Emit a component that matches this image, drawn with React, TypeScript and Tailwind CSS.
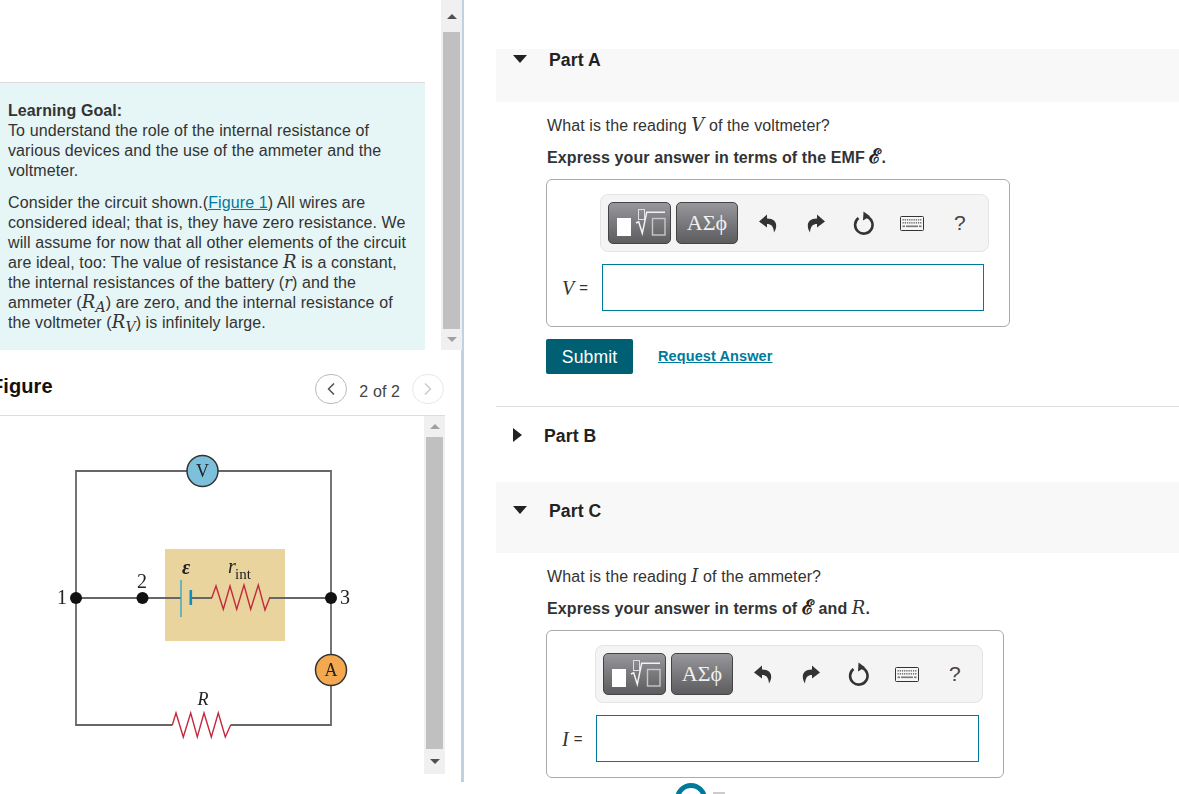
import { ChevronLeft, ChevronRight } from 'lucide-react';
import type { ReactNode } from 'react';

const serif = { fontFamily: '"Liberation Serif", serif' };

function M({ children, className = "font-['DejaVu_Serif',serif] text-[18px]" }: { children: ReactNode; className?: string }) {
  return <i className={`leading-[0] font-normal ${className}`}>{children}</i>;
}

function Script() {
  return <span className="font-['DejaVu_Serif',serif] text-[20px] leading-[0] font-bold text-[#222]">ℰ</span>;
}

function UndoIcon({ flip }: { flip?: boolean }) {
  return (
    <svg width="18" height="19" viewBox="0 0 18 19" className={flip ? '-scale-x-100' : ''}>
      <path d="M8 0.5 L0 7.5 L8 13.5 V10 C12 10 14.5 12 15 18.5 C19 12 18 4.5 8 4.5 Z" fill="#333" />
    </svg>
  );
}

function RefreshIcon() {
  return (
    <svg width="22" height="24" viewBox="0 0 22 24">
      <path d="M14 5.8 A8.7 8.7 0 1 1 5.5 7" fill="none" stroke="#333" strokeWidth="2.6" />
      <path d="M10.5 0.5 L17 5.2 L10 9.5 Z" fill="#333" />
    </svg>
  );
}

function KeyboardIcon() {
  const keys = [];
  for (let i = 0; i < 9; i++) {
    keys.push(<rect key={`a${i}`} x={2.5 + i * 2.2} y="3" width="1.3" height="1.6" fill="#777" />);
    keys.push(<rect key={`b${i}`} x={2.5 + i * 2.2} y="6" width="1.3" height="1.6" fill="#777" />);
  }
  return (
    <svg width="24" height="15" viewBox="0 0 24 15">
      <rect x="0.5" y="0.5" width="23" height="14" rx="1" fill="#f7f7f7" stroke="#333" />
      {keys}
      <rect x="2.5" y="9.5" width="2.5" height="1.6" fill="#777" />
      <rect x="6" y="9.5" width="12" height="1.6" fill="#777" />
      <rect x="19" y="9.5" width="2.5" height="1.6" fill="#777" />
    </svg>
  );
}

function Toolbar({ className }: { className: string }) {
  return (
    <div className={`flex h-[58px] items-center rounded-[8px] border border-[#e4e4e4] bg-[#f4f4f4] pl-[7px] ${className}`}>
      <div className="h-[42px] w-[63px] rounded-[5px] border border-[#444] bg-gradient-to-b from-[#97979c] to-[#5d5d60]">
        <svg width="61" height="40" viewBox="1 1 61 40" className="block">
          <rect x="9" y="16" width="14" height="18" fill="#fff" />
          <rect x="30.5" y="7.5" width="6" height="10" fill="none" stroke="#e0e0e0" />
          <path d="M28 21 L30.7 19.7 L34.3 31.3 L38.7 10.3 H57" fill="none" stroke="#f2f2f2" strokeWidth="1.5" />
          <rect x="44.5" y="16.5" width="12.5" height="16.5" fill="none" stroke="#c8c8c8" strokeWidth="1.4" />
        </svg>
      </div>
      <div className="ml-[5px] flex h-[42px] w-[62px] items-center justify-center rounded-[5px] border border-[#444] bg-gradient-to-b from-[#97979c] to-[#5d5d60] font-['Liberation_Serif',serif] text-[22px] text-[#f0f0f0]">
        ΑΣϕ
      </div>
      <div className="ml-[6px] flex items-center">
        <div className="flex w-[48px] justify-center"><UndoIcon /></div>
        <div className="flex w-[48px] justify-center"><UndoIcon flip /></div>
        <div className="flex w-[48px] justify-center"><RefreshIcon /></div>
        <div className="flex w-[48px] justify-center"><KeyboardIcon /></div>
        <div className="flex w-[48px] justify-center text-[21px] text-[#444]">?</div>
      </div>
    </div>
  );
}

function PartHeader({ label, className }: { label: string; className: string }) {
  return (
    <div className={`flex bg-[#f8f8f8] pl-[17px] ${className}`}>
      <div className="mt-[6px] h-0 w-0 border-x-[7px] border-t-[8px] border-x-transparent border-t-[#222]" />
      <div className="mt-px ml-[22px] text-[17.6px] leading-[20px] font-bold text-[#222]">{label}</div>
    </div>
  );
}

function ScrollBar({ thumb, top, bottom, upColor, downColor, className }: {
  thumb: string; top: string; bottom: string; upColor: string; downColor: string; className: string;
}) {
  return (
    <div className={`flex flex-col items-center bg-[#f0f0f0] ${className}`}>
      <div className={`flex w-full items-center justify-center ${top}`}>
        <div className={`h-0 w-0 border-x-[5px] border-b-[5px] border-x-transparent ${upColor}`} />
      </div>
      <div className={`w-[17px] bg-[#c0c0c0] ${thumb}`} />
      <div className={`flex w-full items-center justify-center ${bottom}`}>
        <div className={`h-0 w-0 border-x-[5px] border-t-[5px] border-x-transparent ${downColor}`} />
      </div>
    </div>
  );
}

function Circuit() {
  return (
    <svg width="424" height="358" viewBox="0 416 424 358" className="block blur-[0.4px]">
      <rect x="165" y="549" width="120" height="92" fill="#e9d49d" />
      <path d="M76 598 V471 H331 V725 H230.5 M172.5 725 H76 V598 H181 M191 598 H212 M270 598 H331" fill="none" stroke="#666" strokeWidth="1.8" />
      <path d="M181 580 V617" stroke="#3aa5c0" strokeWidth="1.4" />
      <path d="M190.8 590 V605" stroke="#0a8fc4" strokeWidth="2.6" />
      <path d="M211.7 598 L216 586 L223.3 609.3 L230 586 L236.7 609.3 L244 585 L250.7 609.3 L258.3 585 L265 610 L270 597" fill="none" stroke="#c5293f" strokeWidth="1.4" />
      <path d="M172.3 725 L176 713 L183.3 737 L190.7 713 L197.3 737 L204 713 L211.3 737 L218.3 713 L225.3 737 L230.7 725" fill="none" stroke="#c5293f" strokeWidth="1.4" />
      <circle cx="202.5" cy="471" r="15.5" fill="#7cc0dc" stroke="#333" strokeWidth="1.5" />
      <circle cx="331" cy="670" r="15.5" fill="#f4a950" stroke="#333" strokeWidth="1.5" />
      <circle cx="76" cy="598" r="6" fill="#111" />
      <circle cx="142.5" cy="598" r="6" fill="#111" />
      <circle cx="331" cy="598" r="6" fill="#111" />
      <g style={serif} fill="#222" fontSize="20">
        <text x="202.5" y="477" textAnchor="middle" fontSize="18">V</text>
        <text x="331" y="676" textAnchor="middle" fontSize="18">A</text>
        <text x="57" y="603.5">1</text>
        <text x="137" y="588">2</text>
        <text x="340" y="603.5">3</text>
        <text x="197.5" y="705" fontStyle="italic" fontSize="18">R</text>
        <text x="182" y="574" fontStyle="italic" fontWeight="bold" fontSize="20">ε</text>
        <text x="228" y="573" fontStyle="italic" fontSize="20">r</text>
        <text x="235" y="579" fontSize="15">int</text>
      </g>
    </svg>
  );
}

function AnswerBox({ symbol, boxClass, toolbarClass, labelClass, inputClass }: {
  symbol: string; boxClass: string; toolbarClass: string; labelClass: string; inputClass: string;
}) {
  return (
    <div className={`h-[148px] rounded-[6px] border border-[#aaa] pt-[14px] ${boxClass}`}>
      <Toolbar className={toolbarClass} />
      <div className="mt-[12px] flex items-center">
        <div className={`flex items-center text-[#333] ${labelClass}`}>
          <M className="font-['Liberation_Serif',serif] text-[20px]">{symbol}</M>
          <span className="ml-[5px] text-[15px]">=</span>
        </div>
        <div className={`h-[47px] border border-[#007a9c] ${inputClass}`} />
      </div>
    </div>
  );
}

export default function App() {
  return (
    <div className="flex h-[794px] w-[1179px] overflow-hidden bg-white font-['Liberation_Sans',sans-serif] text-[16px] leading-[20px] tracking-[0.1px] text-[#333]">
      <div className="w-[464px] flex-none">
        <div className="flex h-[350px] border-r-2 border-[#c0d1e2]">
          <div className="w-[441px] flex-none pt-[82px]">
            <div className="h-[268px] w-[425px] border-t border-[#ddd] bg-[#e6f5f6] pt-[18px] pr-[12px] pl-[8px]">
              <b>Learning Goal:</b>
              <p>To understand the role of the internal resistance of various devices and the use of the ammeter and the voltmeter.</p>
              <p className="mt-[12px]">
                Consider the circuit shown.(<span className="text-[#007a9c] underline">Figure 1</span>) All wires are considered ideal; that is, they have zero resistance. We will assume for now that all other elements of the circuit are ideal, too: The value of resistance <M>R</M> is a constant, the internal resistances of the battery (<M className="font-['DejaVu_Serif',serif] text-[16px]">r</M>) and the ammeter (<M>R<sub className="text-[14px]">A</sub></M>) are zero, and the internal resistance of the voltmeter (<M>R<sub className="text-[14px]">V</sub></M>) is infinitely large.
              </p>
            </div>
          </div>
          <ScrollBar
            className="w-[21px]"
            top="h-[32px]"
            thumb="h-[297px]"
            bottom="h-[21px]"
            upColor="border-b-[#505050]"
            downColor="border-t-[#a0a0a0]"
          />
        </div>
        <div className="flex h-[432px] flex-col border-r-[3px] border-[#c0d1e2]">
          <div className="flex h-[66px] w-[445px] flex-none items-start justify-between border-b border-[#ddd] pt-[24px]">
            <div className="mt-[2px] -ml-[9px] text-[20px] font-bold text-[#111]">Figure</div>
            <div className="flex items-start">
              <div className="flex h-[30px] w-[32px] items-center justify-center rounded-full border border-[#bbb]">
                <ChevronLeft size={20} color="#555" />
              </div>
              <div className="mx-[12px] mt-[8px] text-[#444]">2 of 2</div>
              <div className="mr-[1px] flex h-[30px] w-[32px] items-center justify-center rounded-full border border-[#e8e8e8]">
                <ChevronRight size={20} color="#ccc" />
              </div>
            </div>
          </div>
          <div className="flex">
            <div className="h-[358px] w-[424px] flex-none">
              <Circuit />
            </div>
            <ScrollBar
              className="h-[358px] w-[21px]"
              top="h-[21px]"
              thumb="h-[312px]"
              bottom="h-[25px]"
              upColor="border-b-[#a0a0a0]"
              downColor="border-t-[#505050]"
            />
          </div>
        </div>
      </div>

      <div className="flex-1 pt-[49px] pl-[32px]">
        <PartHeader label="Part A" className="h-[53px]" />
        <div className="pl-[50px]">
          <p className="mt-[14px] ml-px">What is the reading <M>V</M> of the voltmeter?</p>
          <p className="mt-[12px] ml-px font-bold">Express your answer in terms of the EMF <Script />.</p>
          <AnswerBox
            symbol="V"
            boxClass="mt-[11px] w-[464px]"
            toolbarClass="ml-[53px] w-[389px]"
            labelClass="ml-[15px] w-[40px]"
            inputClass="w-[382px]"
          />
          <div className="mt-[12px] flex items-center">
            <div className="flex h-[35px] w-[87px] items-center justify-center rounded-[2px] bg-[#005f73] text-[17.6px] text-white">Submit</div>
            <div className="-mt-[2px] ml-[25px] text-[14.5px] font-bold text-[#007a9c] underline">Request Answer</div>
          </div>
        </div>
        <div className="mt-[32px] h-px bg-[#ddd]" />
        <div className="flex h-[75px] pt-[19px] pl-[17px]">
          <div className="mt-[2px] h-0 w-0 border-y-[7px] border-l-[9px] border-y-transparent border-l-[#222]" />
          <div className="ml-[22px] text-[17.6px] font-bold text-[#222]">Part B</div>
        </div>
        <PartHeader label="Part C" className="h-[71px] pt-[18px]" />
        <div className="pl-[50px]">
          <p className="mt-[14px] ml-px">What is the reading <M>I</M> of the ammeter?</p>
          <p className="mt-[12px] ml-px font-bold">Express your answer in terms of <Script /> and <M>R</M>.</p>
          <AnswerBox
            symbol="I"
            boxClass="mt-[11px] w-[458px]"
            toolbarClass="ml-[48px] w-[388px]"
            labelClass="ml-[15px] w-[34px]"
            inputClass="w-[383px]"
          />
          <div className="mt-[5px] flex items-start">
            <div className="ml-[129px] h-[32px] w-[32px] flex-none rounded-full border-[5px] border-[#007a9c]" />
            <div className="mt-[9px] ml-[6px] h-[6px] w-[12px] bg-[#ccc]" />
          </div>
        </div>
      </div>
    </div>
  );
}
